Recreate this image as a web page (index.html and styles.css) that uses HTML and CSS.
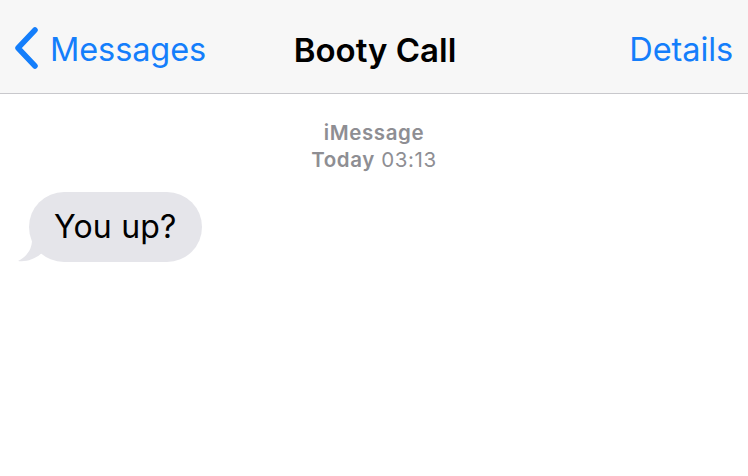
FILE: index.html
```html
<!DOCTYPE html>
<html>
<head>
<meta charset="utf-8">
<link rel="stylesheet" href="styles.css">
</head>
<body>
<header class="nav">
  <a class="back">
    <svg class="chev" width="28" height="42" viewBox="0 0 28 42"><path d="M23 3 L6 21 L23 39" fill="none" stroke="#147efb" stroke-width="5.5" stroke-linecap="round" stroke-linejoin="round"/></svg>
    <span class="back-label">Messages</span>
  </a>
  <h1 class="title">Booty Call</h1>
  <a class="details">Details</a>
</header>
<main class="thread">
  <div class="meta">
    <div class="service">iMessage</div>
    <div class="time"><b>Today</b> 03:13</div>
  </div>
  <div class="row">
    <div class="bubble">You up?
      <svg class="tail" width="24" height="22" viewBox="0 0 24 22"><path d="M14 0 C14 8 10 16 0 21 C9 22 17 19 24 13 Z" fill="#e5e5ea"/></svg>
    </div>
  </div>
</main>
</body>
</html>
```
FILE: styles.css
```css
html, body { margin: 0; padding: 0; background: #fff; }
body { width: 748px; height: 476px; overflow: hidden; font-family: "Inter", "Roboto", sans-serif; }
.nav {
  height: 94px;
  background: #f7f7f7;
  border-bottom: 1px solid #c8c8cc;
  display: flex;
  align-items: center;
  justify-content: space-between;
  padding: 6px 15px 0 12px;
  box-sizing: border-box;
  position: relative;
}
.back { display: flex; align-items: center; color: #147efb; font-size: 32.5px; gap: 10px; }
.chev { display: block; margin-top: -3px; }
.back-label { letter-spacing: -0.1px; }
.title {
  position: absolute; left: 0; right: 0; top: 6px; bottom: 0;
  display: flex; align-items: center; justify-content: center;
  margin: 0; font-size: 33px; font-weight: 600; color: #000; pointer-events: none;
  padding-left: 2px;
}
.details { color: #147efb; font-size: 32.5px; letter-spacing: -0.1px; }
.meta { text-align: center; color: #8e8e93; font-size: 20.5px; letter-spacing: 0.6px; line-height: 27px; padding-top: 25px; }
.service { font-weight: 600; }
.time b { font-weight: 600; }
.row { display: flex; padding: 19px 0 0 29px; }
.bubble {
  position: relative;
  background: #e5e5ea;
  border-radius: 35px;
  height: 70px;
  line-height: 70px;
  padding: 0 25px;
  font-size: 32px;
  color: #000;
  letter-spacing: 0.2px;
}
.tail { position: absolute; left: -11px; bottom: 0; }
```
